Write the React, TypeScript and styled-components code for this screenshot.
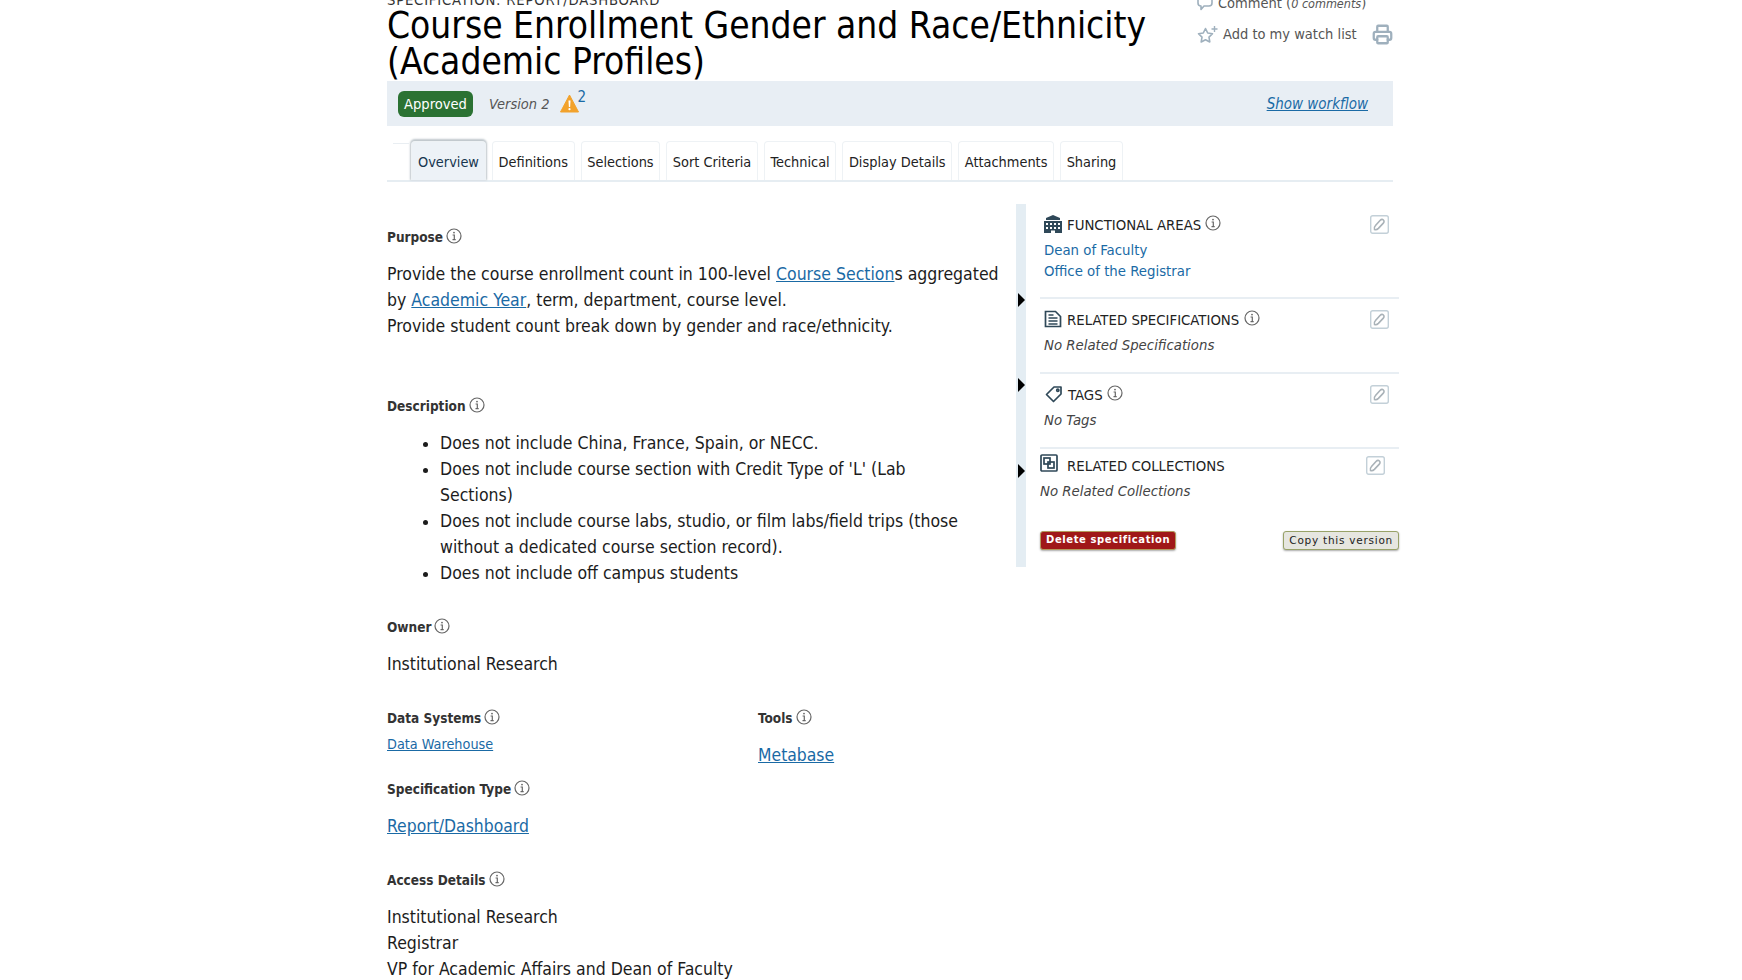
import { FunctionComponent, ReactNode } from "react"
import styled, { createGlobalStyle } from "styled-components"
import { LuPrinter } from "react-icons/lu"

const Global = createGlobalStyle`
    html, body { margin: 0; padding: 0; height: 980px; overflow: hidden; background: #fff; }
    body { font-family: "DejaVu Sans", "Liberation Sans", sans-serif; font-stretch: condensed; color: #1c1c1c; }
    a { color: #1a6aa5; }
`

const Page = styled.div`
    width: 1012px;
    margin-left: 387px;
    margin-top: -8px;
    font-size: 16px;
`

const Header = styled.header`
    display: flex;
    justify-content: space-between;
    width: 1006px;
`

const Kicker = styled.div`
    font-size: 14.7px;
    line-height: 16px;
    letter-spacing: 0.8px;
    color: #333;
    text-transform: uppercase;
`

const Title = styled.h1`
    margin: 0 0 1px;
    width: 770px;
    font-size: 36.8px;
    font-weight: 400;
    line-height: 36px;
    color: #000;
`

const Actions = styled.div`
    width: 196px;
    margin-top: -4px;
    font-size: 14.5px;
    color: #555;
`

const ActionRow = styled.div`
    display: flex;
    align-items: center;
    gap: 5px;
    height: 30px;
    white-space: nowrap;
    svg { color: #9fb0bd; flex: none; }
    em { font-size: 12.5px; }
    & + & { margin-top: 1px; }
`

const Print = styled(LuPrinter)`
    margin-left: auto;
    width: 21px;
    height: 21px;
    stroke-width: 2.6;
`

const Strip = styled.div`
    display: flex;
    align-items: center;
    width: 1006px;
    height: 45px;
    padding: 0 25px 0 11px;
    box-sizing: border-box;
    background: #e8eef4;
`

const Badge = styled.span`
    background: #2b7233;
    color: #fff;
    font-size: 14.6px;
    border-radius: 6px;
    padding: 4px 6px;
    line-height: 18px;
`

const Version = styled.em`
    margin-left: 16px;
    font-size: 14.5px;
    color: #555;
`

const Warn = styled.span`
    display: flex;
    margin-left: 10px;
    align-items: flex-start;
    sup { font-size: 15px; line-height: 14px; color: #1a6aa5; margin: -4px 0 0 -1px; }
`

const Workflow = styled.a`
    margin-left: auto;
    font-size: 15px;
    font-style: italic;
`

const Tabs = styled.nav`
    position: relative;
    display: flex;
    gap: 6px;
    width: 1006px;
    height: 41px;
    margin-top: 15px;
    padding-left: 24px;
    box-sizing: border-box;
    border-bottom: 2px solid #e6edf2;
    &::before {
        content: "";
        position: absolute;
        left: 6px;
        top: 2px;
        width: 16px;
        height: 1px;
        background: #e9eef2;
    }
`

const Tab = styled.div<{ $active?: boolean }>`
    display: flex;
    align-items: center;
    padding: 1px ${p => (p.$active ? "6px" : "5.6px")} 0;
    font-size: 14.4px;
    color: ${p => (p.$active ? "#17364f" : "#222")};
    border: 1px solid #eef2f5;
    border-bottom: 0;
    border-radius: 4px 4px 0 0;
    background: ${p => (p.$active ? "#edf2f7" : "#fff")};
    box-shadow: ${p => (p.$active ? "0 -1px 2px 1px #bfc7cc" : "none")};
`

const Columns = styled.div`
    display: grid;
    grid-template-columns: 629px 383px;
    margin-top: 22px;
`

const Main = styled.main`
    padding-top: 23px;
    line-height: 26px;
    font-size: 17.5px;
`

const LabelRow = styled.div`
    display: flex;
    align-items: center;
    gap: 3px;
    height: 20px;
    font-size: 13.5px;
    font-weight: 600;
    color: #333;
`

const Section = styled.section<{ $gap: number }>`
    margin-bottom: ${p => p.$gap}px;
`

const Body = styled.div`
    margin-top: 14px;
    width: 616px;
`

const Bullets = styled.ul`
    margin: 14px 0 0;
    padding-left: 53px;
    width: 533px;
`

const TwoCol = styled.div`
    display: grid;
    grid-template-columns: 371px 1fr;
`

const SmallLink = styled.a`
    display: block;
    font-size: 14.3px;
    line-height: 20px;
    margin-top: 6px;
`

const BigLink = styled.a`
    display: inline-block;
    font-size: 17.4px;
    margin-top: 14px;
`

const Aside = styled.aside`
    position: relative;
    height: 363px;
    padding-left: 14px;
    border-left: 10px solid #e4edf3;
    box-sizing: border-box;
`

const Arrow = styled.span<{ $top: number }>`
    position: absolute;
    left: -8px;
    top: ${p => p.$top}px;
    width: 0;
    height: 0;
    border-left: 7px solid #000;
    border-top: 7px solid transparent;
    border-bottom: 7px solid transparent;
`

const Block = styled.div<{ $height: number; $flat?: boolean }>`
    height: ${p => p.$height}px;
    padding: ${p => (p.$flat ? "5px 14px 0 0" : "9px 10px 0 4px")};
    box-sizing: border-box;
    border-bottom: ${p => (p.$flat ? "0" : "2px solid #e8eef3")};
`

const BlockHead = styled.div`
    display: flex;
    align-items: center;
    height: 22px;
    font-size: 14.8px;
    color: #222;
    svg.mark { margin-right: 5px; color: #2f4858; flex: none; }
`

const EditBtn = styled.span`
    margin-left: auto;
    display: flex;
`

const BlockLink = styled.a`
    display: block;
    font-size: 14.8px;
    line-height: 21px;
    text-decoration: none;
    &:first-of-type { margin-top: 4px; }
`

const Empty = styled.div`
    margin-top: 4px;
    font-size: 14.8px;
    line-height: 21px;
    font-style: italic;
    color: #444;
`

const Buttons = styled.div`
    display: flex;
    justify-content: space-between;
    margin-top: 22px;
    align-items: flex-start;
`

const Btn = styled.span<{ $danger?: boolean }>`
    font-family: "DejaVu Sans", sans-serif;
    font-stretch: normal;
    font-size: ${p => (p.$danger ? "10px" : "10.5px")};
    font-weight: ${p => (p.$danger ? 700 : 500)};
    letter-spacing: ${p => (p.$danger ? "0.6px" : "0.75px")};
    line-height: 15px;
    padding: ${p => (p.$danger ? "0 5px 2px" : "1px 5px")};
    border-radius: 3px;
    color: ${p => (p.$danger ? "#fff" : "#222")};
    background: ${p => (p.$danger ? "#a01818" : "#e6e6e0")};
    border: 1px solid ${p => (p.$danger ? "#b39a5c" : "#98a268")};
    box-shadow: 0 1px 2px #aaa;
`

const Info = ({ size = 16 }: { size?: number }) => (
    <svg width={size} height={size} viewBox="0 0 16 16" fill="none" stroke="#666" style={{ flex: "none", marginTop: -2 }}>
        <circle cx="8" cy="8" r="7" strokeWidth="1.2" />
        <circle cx="8" cy="4.6" r="0.9" fill="#666" stroke="none" />
        <path d="M6.6 7h1.7v4.4M6.5 11.6h3.2" strokeWidth="1.2" />
    </svg>
)

const Edit = () => (
    <svg width="19" height="19" viewBox="0 0 19 19" fill="none">
        <rect x="0.7" y="0.7" width="17.6" height="17.6" rx="2" stroke="#c3d0d8" strokeWidth="1.4" />
        <path d="M4.5 14.5c-.6-1.6 0-3 1-4l4.5-5c1-1 2.4-1.4 3.4-.5s.7 2.3-.3 3.4l-4.7 5c-1 1-2.4 1.6-3.900 1.100z" stroke="#a9b2b8" strokeWidth="1.6" />
    </svg>
)

const Warning = () => (
    <svg width="19" height="19" viewBox="0 0 19 19">
        <path d="M9.500 1 18.500 18H.5z" fill="#f2a22c" stroke="#f2a22c" strokeWidth="1" strokeLinejoin="round" />
        <path d="M8.500 6.500h2l-.4 6.500H8.900z" fill="#fff" />
        <circle cx="9.500" cy="15.200" r="1.100" fill="#fff" />
    </svg>
)

const Bubble = () => (
    <svg width="16" height="16" viewBox="0 0 16 16" fill="none" stroke="currentColor" strokeWidth="1.600" strokeLinejoin="round">
        <path d="M4 1h8a3 3 0 0 1 3 3v4a3 3 0 0 1-3 3H7l-3 3.500V11a3 3 0 0 1-3-3V4a3 3 0 0 1 3-3z" />
    </svg>
)

const StarPlus = () => (
    <svg width="21" height="19" viewBox="0 0 21 19" fill="none" stroke="currentColor" strokeWidth="1.600" strokeLinejoin="round">
        <path d="M8.500 3.500 10.700 8l4.800.7-3.500 3.400.8 4.900-4.300-2.300L4.200 17l.8-4.900-3.500-3.400L6.300 8z" />
        <path d="M17.500 1v6M14.500 4h6" strokeWidth="1.400" />
    </svg>
)

const Building = () => (
    <svg className="mark" width="18" height="18" viewBox="0 0 18 18" fill="currentColor">
        <path d="M9 0 2 3v2h14V3z" />
        <path fillRule="evenodd" d="M0 6h18v12H0zm2 2v2h2V8zm0 4v2h2v-2zm4-4v2h2V8zm4 0v2h2V8zm4 0v2h2V8zm0 4v2h2v-2zm-4 0v2h2v-2zm-4 0v2h2v-2zm1 3.500V18h4v-2.500z" />
    </svg>
)

const DocIcon = () => (
    <svg className="mark" width="18" height="18" viewBox="0 0 18 18" fill="none" stroke="currentColor" strokeWidth="1.700">
        <path d="M1.500 1.500h10l5 5v10h-15z" />
        <path d="M4.500 8h9M4.500 11h9M4.500 14h9M4.500 5h5" strokeWidth="1.300" />
    </svg>
)

const TagIcon = () => (
    <svg className="mark" width="18" height="18" viewBox="0 0 18 18" fill="none" stroke="currentColor" strokeWidth="1.700" style={{ marginLeft: 1 }}>
        <path d="M1.500 9.500 9 2h7v7l-7.500 7.500z" strokeLinejoin="round" />
        <circle cx="12.800" cy="5.200" r="1.100" />
    </svg>
)

const CollectionIcon = () => (
    <svg className="mark" width="18" height="18" viewBox="0 0 18 18" fill="none" stroke="currentColor" strokeWidth="1.700" style={{ marginRight: 9, marginTop: -4 }}>
        <rect x="1" y="1" width="16" height="16" rx="1" />
        <rect x="4" y="4" width="6" height="6" />
        <rect x="8" y="8" width="6" height="6" />
    </svg>
)

const Label: FunctionComponent<{ children: ReactNode }> = ({ children }) => (
    <LabelRow>{children}<Info /></LabelRow>
)

const tabs = ["Overview", "Definitions", "Selections", "Sort Criteria", "Technical", "Display Details", "Attachments", "Sharing"]

const App: FunctionComponent = () => (
    <Page>
        <Global />
        <Header>
            <div>
                <Kicker>Specification: Report/Dashboard</Kicker>
                <Title>Course Enrollment Gender and Race/Ethnicity (Academic Profiles)</Title>
            </div>
            <Actions>
                <ActionRow><Bubble /><span>Comment (<em>0 comments</em>)</span></ActionRow>
                <ActionRow><StarPlus /><span>Add to my watch list</span><Print /></ActionRow>
            </Actions>
        </Header>
        <Strip>
            <Badge>Approved</Badge>
            <Version>Version 2</Version>
            <Warn><Warning /><sup>2</sup></Warn>
            <Workflow href="#">Show workflow</Workflow>
        </Strip>
        <Tabs>
            {tabs.map((t, i) => <Tab key={t} $active={i === 0}>{t}</Tab>)}
        </Tabs>
        <Columns>
            <Main>
                <Section $gap={57}>
                    <Label>Purpose</Label>
                    <Body>
                        Provide the course enrollment count in 100-level <a href="#">Course Section</a>s aggregated by <a href="#">Academic Year</a>, term, department, course level.<br />
                        Provide student count break down by gender and race/ethnicity.
                    </Body>
                </Section>
                <Section $gap={31}>
                    <Label>Description</Label>
                    <Bullets>
                        <li>Does not include China, France, Spain, or NECC.</li>
                        <li>Does not include course section with Credit Type of 'L' (Lab Sections)</li>
                        <li>Does not include course labs, studio, or film labs/field trips (those without a dedicated course section record).</li>
                        <li>Does not include off campus students</li>
                    </Bullets>
                </Section>
                <Section $gap={31}>
                    <Label>Owner</Label>
                    <Body>Institutional Research</Body>
                </Section>
                <TwoCol>
                    <Section $gap={25}>
                        <Label>Data Systems</Label>
                        <SmallLink href="#">Data Warehouse</SmallLink>
                    </Section>
                    <div>
                        <Label>Tools</Label>
                        <BigLink href="#">Metabase</BigLink>
                    </div>
                </TwoCol>
                <Section $gap={31}>
                    <Label>Specification Type</Label>
                    <BigLink href="#">Report/Dashboard</BigLink>
                </Section>
                <Section $gap={0}>
                    <Label>Access Details</Label>
                    <Body>
                        Institutional Research<br />
                        Registrar<br />
                        VP for Academic Affairs and Dean of Faculty
                    </Body>
                </Section>
            </Main>
            <Aside>
                <Arrow $top={89} />
                <Arrow $top={174} />
                <Arrow $top={260} />
                <Block $height={95}>
                    <BlockHead><Building />FUNCTIONAL AREAS&nbsp;<Info /><EditBtn><Edit /></EditBtn></BlockHead>
                    <BlockLink href="#">Dean of Faculty</BlockLink>
                    <BlockLink href="#">Office of the Registrar</BlockLink>
                </Block>
                <Block $height={75}>
                    <BlockHead><DocIcon />RELATED SPECIFICATIONS&nbsp;<Info /><EditBtn><Edit /></EditBtn></BlockHead>
                    <Empty>No Related Specifications</Empty>
                </Block>
                <Block $height={75}>
                    <BlockHead><TagIcon />TAGS&nbsp;<Info /><EditBtn><Edit /></EditBtn></BlockHead>
                    <Empty>No Tags</Empty>
                </Block>
                <Block $height={60} $flat>
                    <BlockHead><CollectionIcon />RELATED COLLECTIONS<EditBtn><Edit /></EditBtn></BlockHead>
                    <Empty>No Related Collections</Empty>
                </Block>
                <Buttons>
                    <Btn $danger>Delete specification</Btn>
                    <Btn>Copy this version</Btn>
                </Buttons>
            </Aside>
        </Columns>
    </Page>
)

export default App
